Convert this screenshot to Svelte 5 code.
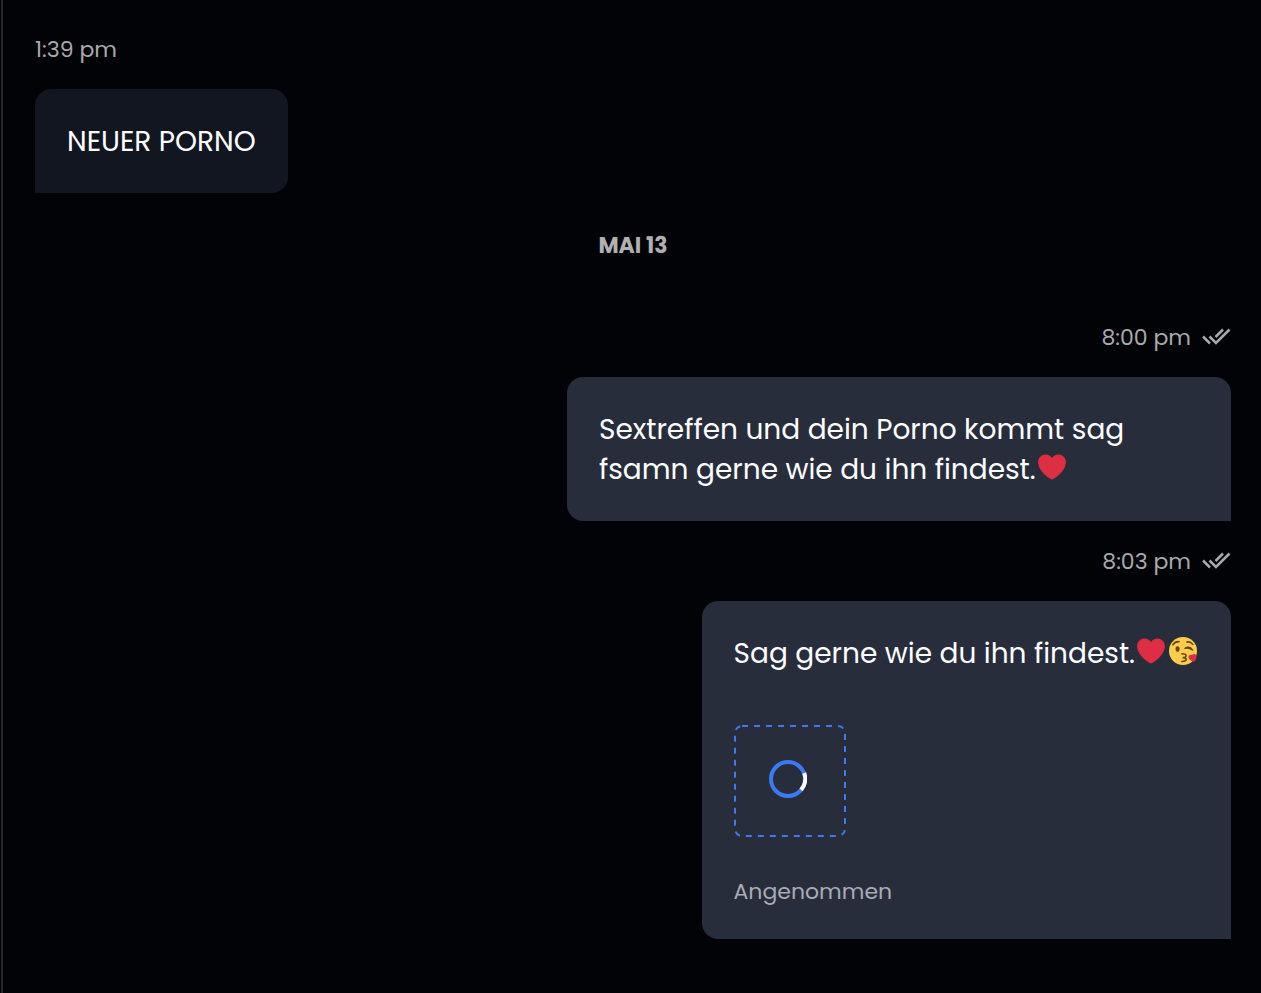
<script>
  const messages = [
    { time: '1:39 pm', own: false, text: 'NEUER PORNO', emojis: [] },
    { day: 'MAI 13' },
    { time: '8:00 pm', own: true, text: 'Sextreffen und dein Porno kommt sag fsamn gerne wie du ihn findest.', emojis: ['heart'] },
    { time: '8:03 pm', own: true, text: 'Sag gerne wie du ihn findest.', emojis: ['heart', 'kiss'], status: 'Angenommen' }
  ];
</script>

{#snippet heart()}
  <svg class="emoji" viewBox="0 0 36 36" role="img" aria-label="❤️">
    <path fill="#dd2e44" d="M35.9 11.8c0-5.4-4.4-9.8-9.8-9.8-3.4 0-6.4 1.7-8.1 4.3C16.3 3.7 13.3 2 9.9 2 4.5 2 .1 6.4.1 11.8c0 .8.1 1.5.3 2.2C1.8 22.6 11.3 31.6 18 34c6.7-2.4 16.2-11.4 17.6-20 .2-.7.3-1.400.3-2.200z" />
  </svg>
{/snippet}

{#snippet kiss()}
  <svg class="emoji" viewBox="0 0 36 36" role="img" aria-label="😘">
    <circle cx="18" cy="18" r="18" fill="#ffcc4d" />
    <ellipse cx="11" cy="15.500" rx="2.600" ry="3.600" fill="#664500" />
    <path d="M5 10Q8 5.500 13 6M23 6.500Q27.500 5.500 30.500 9.500" fill="none" stroke="#664500" stroke-width="2" stroke-linecap="round" />
    <path d="M20.500 14.500Q26 10.500 30.500 17Q26 13.500 20.500 14.500z" fill="#664500" stroke="#664500" stroke-width="1.600" stroke-linejoin="round" />
    <path d="M16.500 21.500q5.500 0 5.500 2.500t-4.500 2.500q4.500 0 4.500 2.500t-5.500 2.500" fill="none" stroke="#664500" stroke-width="2" stroke-linecap="round" />
    <path fill="#dd2e44" d="M35.300 24.500c-.5-2.700-4-3.500-5.500-1.300-2.200-1.300-5.200.6-4.700 3.300.5 3 4 5 7 5.300 2-1.800 3.700-4.500 3.200-7.300z" />
  </svg>
{/snippet}

<main class="chat">
  {#each messages as m}
    {#if m.day}
      <h2 class="day">{m.day}</h2>
    {:else}
      <article class="message" class:own={m.own}>
        <div class="meta">
          <time>{m.time}</time>
          {#if m.own}
            <svg class="ticks" viewBox="0 0 30 20" role="img" aria-label="Gelesen">
              <path d="M2 8.500L9 15.500M8.500 8.500L15 15L28.500 1.500M14.500 9L22 1.500" />
            </svg>
          {/if}
        </div>
        <div class="bubble">
          <p>{m.text}{#each m.emojis as e}{#if e === 'heart'}{@render heart()}{:else}{@render kiss()}{/if}{/each}</p>
          {#if m.status}
            <div class="attachment">
              <svg class="frame" viewBox="0 0 112 112" aria-hidden="true">
                <rect x="1" y="1" width="110" height="110" rx="7" />
              </svg>
              <svg class="spinner" viewBox="0 0 38 38" role="img" aria-label="Wird geladen">
                <circle cx="19" cy="19" r="17" />
                <path d="M35.200 13A17 17 0 0 1 32 29.900" />
              </svg>
            </div>
            <span class="status">{m.status}</span>
          {/if}
        </div>
      </article>
    {/if}
  {/each}
</main>

<style>
  :global(body) {
    background: #020307;
  }
  .chat {
    box-sizing: border-box;
    min-height: 100vh;
    margin-left: 1px;
    padding: 34px 30px 32px 32px;
    border-left: 2px solid #29292d;
    display: flex;
    flex-direction: column;
    gap: 25px;
    color: #fff;
    font-family: Poppins, Inter, sans-serif;
    font-size: 28px;
    line-height: 40px;
  }
  .day {
    margin: 12px 0 35px;
    text-align: center;
    font-size: 22px;
    line-height: 32px;
    font-weight: 700;
    color: #b0b0b3;
  }
  .message {
    display: flex;
    flex-direction: column;
    align-items: flex-start;
    gap: 23px;
  }
  .own {
    align-items: flex-end;
  }
  .meta {
    display: flex;
    align-items: center;
    gap: 10px;
    font-size: 22px;
    line-height: 32px;
    color: #a9a9ad;
  }
  .ticks {
    width: 30px;
    height: 20px;
    fill: none;
    stroke: currentColor;
    stroke-width: 2.5;
  }
  .bubble {
    box-sizing: border-box;
    max-width: 664px;
    padding: 33px 32px 31px;
    border-radius: 16px 16px 16px 0;
    background: #121620;
  }
  .own .bubble {
    border-radius: 16px 16px 0 16px;
    background: #282d3c;
  }
  p {
    margin: 0;
  }
  .emoji {
    width: 28px;
    height: 28px;
    margin: 0 2px;
    vertical-align: -2px;
  }
  .attachment {
    display: grid;
    place-items: center;
    width: 112px;
    height: 112px;
    margin: 51px 0 39px;
  }
  .attachment > * {
    grid-area: 1 / 1;
  }
  .frame {
    width: 112px;
    height: 112px;
    fill: none;
    stroke: #3b7bec;
    stroke-width: 2;
    stroke-dasharray: 6 6;
  }
  .spinner {
    width: 38px;
    height: 38px;
    margin: 0 4px 4px 0;
    fill: none;
    stroke: #397bf2;
    stroke-width: 4;
  }
  .spinner path {
    stroke: #fff;
  }
  .status {
    display: block;
    font-size: 22px;
    line-height: 32px;
    color: #a9abb5;
  }
</style>
